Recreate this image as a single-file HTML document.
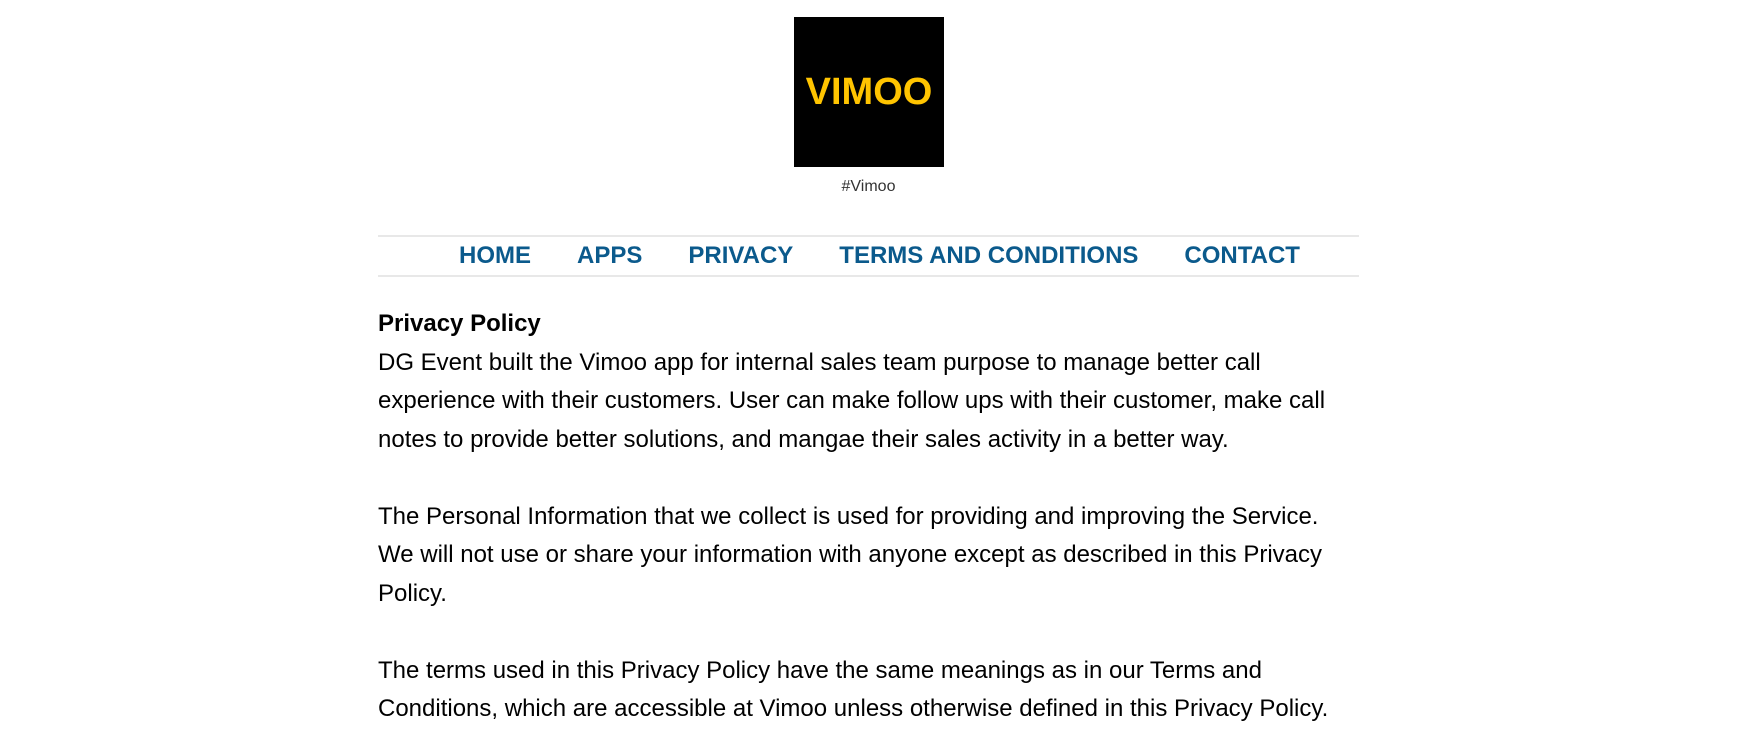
<!DOCTYPE html>
<html><head><meta charset="utf-8"><style>
html,body{margin:0;padding:0;background:#fff;}
body{font-family:"Liberation Sans",Arial,sans-serif;width:1737px;height:752px;overflow:hidden;}
.wrap{width:981px;margin:0 auto;position:relative;}
.logo{position:absolute;left:416px;top:17px;width:150px;height:150px;background:#000;color:#ffc400;font-weight:bold;font-size:38px;text-align:center;line-height:150px;letter-spacing:0px;}
.cap{position:absolute;left:0;width:981px;top:178px;text-align:center;font-size:16px;color:#333;}
.nav{position:absolute;left:0;top:235px;width:959px;padding-left:22px;height:38px;border-top:2px solid #e8e8e8;border-bottom:2px solid #e8e8e8;text-align:center;font-size:24px;font-weight:bold;color:#0b5a8c;line-height:38px;}
.nav span{margin:0 23px;}
.content{position:absolute;left:0;top:305px;width:981px;font-size:24px;line-height:38.5px;color:#000;}
</style></head><body>
<div class="wrap">
<div class="logo">VIMOO</div>
<div class="cap">#Vimoo</div>
<div class="nav"><span>HOME</span><span>APPS</span><span>PRIVACY</span><span>TERMS AND CONDITIONS</span><span>CONTACT</span></div>
<div class="content"><b>Privacy Policy</b><br>DG Event built the Vimoo app for internal sales team purpose to manage better call experience with their customers. User can make follow ups with their customer, make call notes to provide better solutions, and mangae their sales activity in a better way.<br><br>The Personal Information that we collect is used for providing and improving the Service. We will not use or share your information with anyone except as described in this Privacy Policy.<br><br>The terms used in this Privacy Policy have the same meanings as in our Terms and Conditions, which are accessible at Vimoo unless otherwise defined in this Privacy Policy.</div>
</div>
</body></html>
